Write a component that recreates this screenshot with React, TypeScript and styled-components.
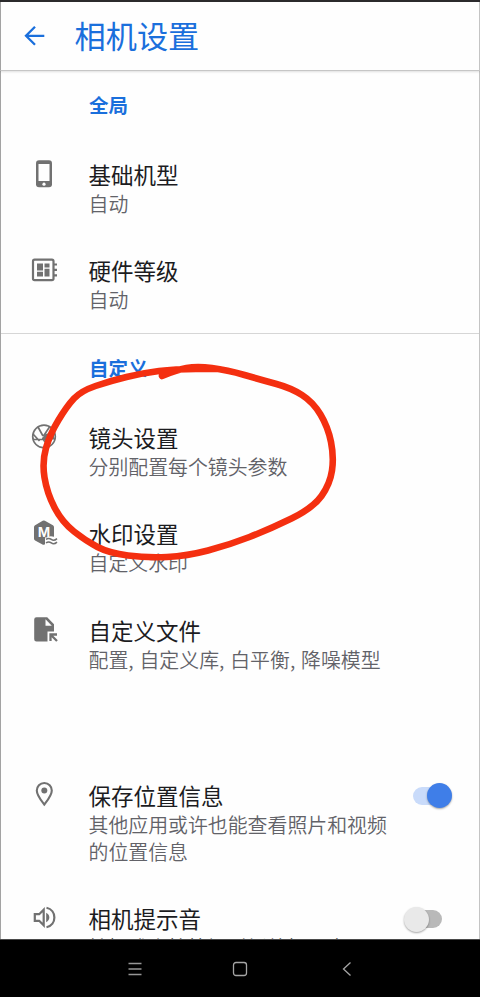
import React from 'react';
import styled, { createGlobalStyle } from 'styled-components';

const Global = createGlobalStyle`
  * { box-sizing: border-box; }
  body { margin: 0; background: #fff; }
`;

const Screen = styled.div`
  position: relative;
  display: flex;
  flex-direction: column;
  width: 480px;
  height: 997px;
  overflow: hidden;
  background: #fefefe;
  font-family: 'Noto Sans CJK SC', sans-serif;
  border-top: 2px solid #2b2a2c;
`;

const Header = styled.header`
  flex: none;
  display: flex;
  align-items: center;
  height: 69px;
  padding: 0 0 1px 21px;
  gap: 27.5px;
  border: 1px solid #a3a3a3;
  border-top: 0;
  border-right-color: #c4c4c4;
  border-bottom-color: #c6c6c6;
  box-shadow: 0 1px 2px rgba(0, 0, 0, 0.12);
  z-index: 1;
`;

const Title = styled.h1`
  margin: -2px 0 0;
  font-size: 31.2px;
  font-weight: 400;
  line-height: 40px;
  color: #1a6fdc;
`;

const Content = styled.main`
  flex: 1;
  min-height: 0;
  overflow: hidden;
  border-left: 1px solid #a3a3a3;
  border-right: 1px solid #c4c4c4;
`;

const Section = styled.section<{ $divided?: boolean; $gap?: number }>`
  border-top: ${(p) => (p.$divided ? '1px solid #d6d6d6' : '0')};
  padding-top: ${(p) => p.$gap ?? 0}px;
`;

const SectionTitle = styled.h2`
  margin: 0;
  height: 69px;
  padding-left: 88px;
  font-size: 19.5px;
  font-weight: 700;
  line-height: 67px;
  color: #1a6fdc;
`;

const Row = styled.div`
  display: grid;
  grid-template-columns: 87.5px 1fr 90px;
  padding: 19px 0 19.4px;
`;

const IconCell = styled.div`
  display: flex;
  justify-content: center;
  width: 28px;
  height: 28px;
  margin: 1px 0 0 29px;
`;

const RowTitle = styled.div`
  font-size: 22.5px;
  line-height: 30px;
  color: #1c1c1f;
  white-space: nowrap;
`;

const Summary = styled.div<{ $dark?: boolean }>`
  margin-top: 1px;
  font-size: 19.9px;
  line-height: 27px;
  font-weight: 350;
  word-spacing: 1.4px;
  color: ${(p) => (p.$dark ? '#222' : '#626268')};
  white-space: pre;
`;

const Track = styled.div<{ $on: boolean }>`
  display: flex;
  align-items: center;
  justify-content: ${(p) => (p.$on ? 'flex-end' : 'flex-start')};
  width: 29px;
  height: 18px;
  margin: 7px 0 0 24px;
  border-radius: 9px;
  background: ${(p) => (p.$on ? '#c9dbfa' : '#b9b9b9')};
`;

const Thumb = styled.div<{ $on: boolean }>`
  flex: none;
  width: 25px;
  height: 25px;
  margin: 0 ${(p) => (p.$on ? '-10px' : '0')} 0 ${(p) => (p.$on ? '0' : '-9px')};
  border-radius: 50%;
  background: ${(p) => (p.$on ? '#3f7ee8' : '#e9e9e9')};
  box-shadow: 0 1px 2px rgba(0, 0, 0, 0.35);
`;

const NavBar = styled.nav`
  flex: none;
  display: grid;
  grid-template-columns: 104px 106px 108px;
  justify-content: center;
  align-items: center;
  justify-items: center;
  height: 58px;
  padding-left: 4px;
  background: #000;
  border-top: 1px solid #4a4a4a;
`;

const Annotation = styled.svg`
  position: absolute;
  left: 0;
  top: -2px;
  pointer-events: none;
  z-index: 2;
`;

const Glyph = ({ children }: { children: React.ReactNode }) => (
  <svg width="28" height="28" viewBox="0 0 28 28" fill="none" stroke="#717171">
    {children}
  </svg>
);

const BackArrow = () => (
  <svg width="25" height="25" viewBox="0 0 25 25" fill="none" stroke="#1a6fdc" strokeWidth="2.3">
    <path d="M22.3 12.8H4.5M13 3.8l-9 9 9 9" />
  </svg>
);

const PhoneIcon = () => (
  <Glyph>
    <rect x="6" y="0.3" width="16" height="27" rx="3" fill="#717171" stroke="none" />
    <path d="M8.5 4h11v17h-11z" fill="#fefefe" stroke="none" />
    <circle cx="14" cy="24.2" r="1.6" fill="#fefefe" stroke="none" />
  </Glyph>
);

const BoardIcon = () => (
  <Glyph>
    <rect x="3" y="3.7" width="20.5" height="20.5" rx="1.6" strokeWidth="2.2" />
    <path d="M24 8.5h3M24 13.9h3M24 19.3h3" strokeWidth="2.2" />
    <path d="M7 7.5h6v7H7zM14.5 7.5h5v4h-5zM7 15.8h6v4.7H7zM14.5 12.8h5v7.7h-5z" fill="#717171" stroke="none" />
  </Glyph>
);

const ApertureIcon = () => (
  <Glyph>
    <circle cx="14" cy="13.5" r="11.3" strokeWidth="1.7" />
    <path d="M8 4l5 9M3 11l6.5 7M3.5 16.5h13M19.5 4l-6 9" strokeWidth="1.7" />
    <path d="M12 15l3.5-4 8.500-2v7.500H12z" fill="#717171" stroke="none" />
    <path d="M13.5 17l6 7" strokeWidth="1.7" />
  </Glyph>
);

const IconLetter = styled.text`
  font: 700 15px 'Liberation Sans', sans-serif;
  fill: #fefefe;
  stroke: none;
  text-anchor: middle;
`;

const WatermarkIcon = () => (
  <Glyph>
    <path
      d="M12.7 1.8Q13.8 1.2 14.9 1.8l8 4.500q1.100.7 1.100 2v9.500q-3.500-1-5.500 0t-3.500.5v7l-1 .4q-.8.300-1.500-.1l-7.400-4.200Q4 20.700 4 19.400V8.300q0-1.300 1.100-2z"
      fill="#717171"
      stroke="none"
    />
    <IconLetter x="14" y="18.3">M</IconLetter>
    <path d="M16 20.4q2.700-2 5.300 0t5.700-.8M16 23.900q2.700-2 5.300 0t5.700-.8" strokeWidth="1.5" />
  </Glyph>
);

const FileIcon = () => (
  <Glyph>
    <path
      d="M6.5 1.2h10.700l6.800 7v7.300h-6.500v10H6.500q-2.300 0-2.300-2.300V3.500q0-2.300 2.300-2.300z"
      fill="#717171"
      stroke="none"
    />
    <path d="M15.5 3.2l6.300 6.500h-6.300z" fill="#fefefe" stroke="none" />
    <path d="M20.5 25v-6.500h6.500M20.700 18.700l6.300 6.300" strokeWidth="2.3" />
  </Glyph>
);

const PinIcon = () => (
  <Glyph>
    <path
      d="M14.3 2c4.400 0 7.500 3.300 7.500 7.600 0 4.900-4.500 10-7.500 14-3-4-7.500-9.100-7.500-14C6.800 5.300 9.900 2 14.300 2z"
      strokeWidth="2.1"
    />
    <circle cx="14.3" cy="9.5" r="3" fill="#717171" stroke="none" />
  </Glyph>
);

const SpeakerIcon = () => (
  <Glyph>
    <path d="M4.8 10.2h4.400l4.500-4.500v15.600l-4.500-4.500H4.800z" strokeWidth="2.2" />
    <path d="M16.2 8.8c4.200 2 4.200 7.400 0 9.400z" fill="#717171" stroke="none" />
    <path d="M16.5 3.8c10.500 2.300 10.500 17.100 0 19.400" strokeWidth="2.2" />
  </Glyph>
);

// Points of the hand-drawn loop, joined through their midpoints.
const loop: [number, number][] = [
  [162, 376], [176, 370], [197, 366], [227, 370], [262, 380], [291, 388], [313, 402],
  [328, 427], [334, 457], [330, 484], [313, 508], [270, 529], [229, 545], [187, 556],
  [147, 558], [109, 553], [86, 541], [62, 522], [47, 493], [42, 462], [50, 434],
  [67, 406], [81, 391], [110, 381], [143, 373], [175, 369], [217, 369],
];

const smooth = (points: [number, number][]) => {
  let d = `M${points[0][0]} ${points[0][1]}`;
  for (let i = 1; i < points.length - 1; i++) {
    const [x, y] = points[i];
    const [nx, ny] = points[i + 1];
    d += `Q${x} ${y} ${(x + nx) / 2} ${(y + ny) / 2}`;
  }
  return `${d}L${points[points.length - 1].join(' ')}`;
};

interface ItemProps {
  icon: React.ReactNode;
  title: string;
  summary: string;
  on?: boolean;
  dark?: boolean;
}

const Item = ({ icon, title, summary, on, dark }: ItemProps) => (
  <Row>
    <IconCell>{icon}</IconCell>
    <div>
      <RowTitle>{title}</RowTitle>
      <Summary $dark={dark}>{summary}</Summary>
    </div>
    {on !== undefined && (
      <Track $on={on}>
        <Thumb $on={on} />
      </Track>
    )}
  </Row>
);

export default function App() {
  return (
    <>
      <Global />
      <Screen>
        <Header>
          <BackArrow />
          <Title>相机设置</Title>
        </Header>
        <Content>
          <Section>
            <SectionTitle>全局</SectionTitle>
            <Item icon={<PhoneIcon />} title="基础机型" summary="自动" />
            <Item icon={<BoardIcon />} title="硬件等级" summary="自动" />
          </Section>
          <Section $divided>
            <SectionTitle>自定义</SectionTitle>
            <Item icon={<ApertureIcon />} title="镜头设置" summary="分别配置每个镜头参数" />
            <Item icon={<WatermarkIcon />} title="水印设置" summary="自定义水印" />
            <Item icon={<FileIcon />} title="自定义文件" summary="配置, 自定义库, 白平衡, 降噪模型" />
          </Section>
          <Section $gap={69}>
            <Item icon={<PinIcon />} title="保存位置信息" summary={'其他应用或许也能查看照片和视频\n的位置信息'} on />
            <Item icon={<SpeakerIcon />} title="相机提示音" summary="拍摄或点按快门时播放提示音" on={false} dark />
          </Section>
        </Content>
        <NavBar>
          <svg width="16" height="16" viewBox="0 0 16 16" stroke="#969696" strokeWidth="1.4">
            <path d="M1.5 2.5h13M1.5 8h13M1.5 13.5h13" />
          </svg>
          <svg width="16" height="16" viewBox="0 0 16 16" fill="none" stroke="#a5a5a5" strokeWidth="1.3">
            <rect x="1.5" y="1.5" width="13" height="13" rx="2.5" />
          </svg>
          <svg width="16" height="16" viewBox="0 0 16 16" fill="none" stroke="#a5a5a5" strokeWidth="1.3">
            <path d="M11.5 1.5L4.5 8l7 6.500" />
          </svg>
        </NavBar>
        <Annotation
          width="480"
          height="997"
          viewBox="0 0 480 997"
          fill="none"
          stroke="#f42f10"
          strokeWidth="6.6"
          strokeLinecap="round"
          strokeLinejoin="round"
        >
          <path d={smooth(loop)} />
        </Annotation>
      </Screen>
    </>
  );
}
